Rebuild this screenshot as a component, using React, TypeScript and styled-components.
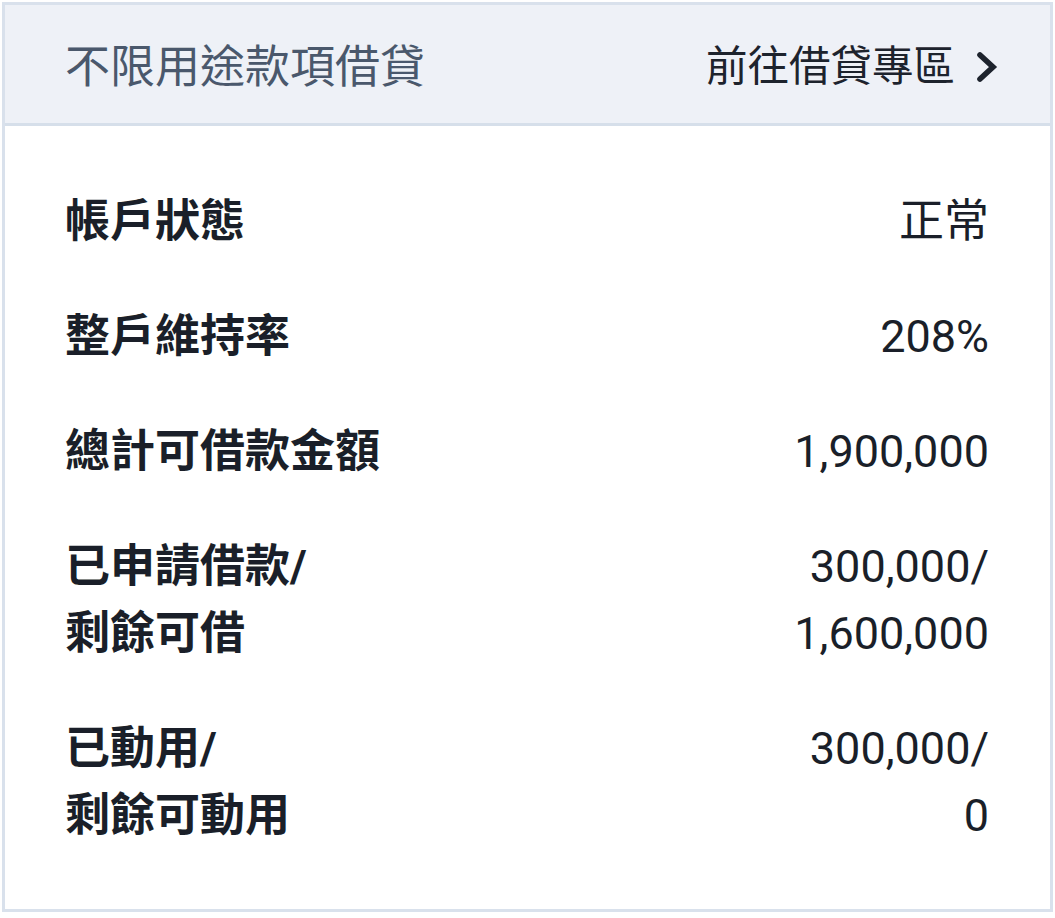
import styled, { createGlobalStyle } from "styled-components";

const GlobalStyle = createGlobalStyle`
  html, body {
    margin: 0;
    padding: 0;
    background: #ffffff;
  }
  body {
    padding: 2px 2px 0 2px;
    font-family: Roboto, "Noto Sans CJK TC", "Noto Sans", sans-serif;
  }
`;

const Card = styled.section`
  width: 1051px;
  box-sizing: border-box;
  border: 3px solid #d9e1ec;
  background: #ffffff;
`;

const Header = styled.header`
  height: 121px;
  box-sizing: border-box;
  display: flex;
  align-items: center;
  justify-content: space-between;
  padding: 6px 52px 0 60px;
  background: #eef1f7;
  border-bottom: 3px solid #d6dfea;
`;

const Title = styled.h2`
  margin: 0;
  font-size: 45px;
  font-weight: 400;
  line-height: 1;
  color: #4a586c;
`;

const Link = styled.a`
  display: flex;
  align-items: center;
  gap: 21px;
  font-size: 41.5px;
  line-height: 1;
  color: #1d232d;
  text-decoration: none;
  cursor: pointer;
`;

const Body = styled.div`
  display: flex;
  flex-direction: column;
  gap: 48px;
  padding: 62px 61px 60px 60px;
`;

const Row = styled.div`
  display: flex;
  justify-content: space-between;
  align-items: flex-start;
`;

const Label = styled.div`
  font-size: 45px;
  font-weight: 700;
  line-height: 67px;
  color: #1a1f29;
`;

const Value = styled.div`
  font-size: 45px;
  font-weight: 400;
  line-height: 67px;
  color: #1a1f29;
  text-align: right;
`;

const Chevron = () => (
  <svg width="22" height="32" viewBox="0 0 22 32" fill="none">
    <polyline
      points="4,4 17,16 4,28"
      stroke="#1d232d"
      strokeWidth="5.6"
      strokeLinecap="round"
      strokeLinejoin="miter"
    />
  </svg>
);

const rows: { label: string[]; value: string[] }[] = [
  { label: ["帳戶狀態"], value: ["正常"] },
  { label: ["整戶維持率"], value: ["208%"] },
  { label: ["總計可借款金額"], value: ["1,900,000"] },
  { label: ["已申請借款/", "剩餘可借"], value: ["300,000/", "1,600,000"] },
  { label: ["已動用/", "剩餘可動用"], value: ["300,000/", "0"] },
];

const App = () => {
  return (
    <>
      <GlobalStyle />
      <Card>
        <Header>
          <Title>不限用途款項借貸</Title>
          <Link>
            前往借貸專區
            <Chevron />
          </Link>
        </Header>
        <Body>
          {rows.map((row) => (
            <Row key={row.label.join("")}>
              <Label>
                {row.label.map((l) => (
                  <div key={l}>{l}</div>
                ))}
              </Label>
              <Value>
                {row.value.map((v) => (
                  <div key={v}>{v}</div>
                ))}
              </Value>
            </Row>
          ))}
        </Body>
      </Card>
    </>
  );
};

export default App;
